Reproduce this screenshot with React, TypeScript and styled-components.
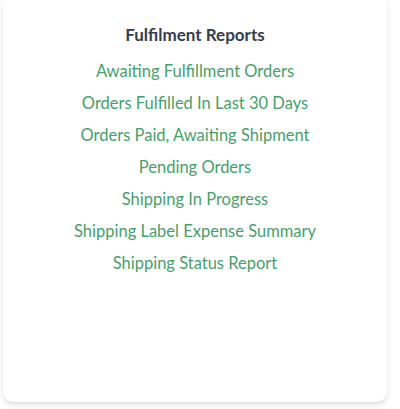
import React from "react";
import styled, { createGlobalStyle } from "styled-components";

const Global = createGlobalStyle`
  html, body { margin: 0; padding: 0; background: #ffffff; }
  body { font-family: Lato, "Open Sans", sans-serif; }
`;

const Page = styled.div`
  padding: 0 13px 7px 3px;
  height: 409px;
  box-sizing: border-box;
  display: flex;
`;

const Card = styled.section`
  flex: 1;
  background: #fff;
  border-radius: 0 0 10px 10px;
  box-shadow: 0 3px 6px rgba(0, 0, 0, 0.1), 0 1px 2px rgba(0, 0, 0, 0.06);
  padding: 23px 16px 0;
  display: flex;
  flex-direction: column;
  align-items: center;
`;

const Title = styled.h3`
  margin: 0 0 12px;
  font-size: 17px;
  line-height: 24px;
  font-weight: 700;
  color: #363d4c;
`;

const List = styled.ul`
  list-style: none;
  margin: 0;
  padding: 0;
  display: flex;
  flex-direction: column;
  align-items: center;
  gap: 8px;
`;

const Link = styled.a`
  display: block;
  font-size: 16.5px;
  line-height: 24px;
  color: #47a06c;
  text-decoration: none;
`;

const reports = [
  "Awaiting Fulfillment Orders",
  "Orders Fulfilled In Last 30 Days",
  "Orders Paid, Awaiting Shipment",
  "Pending Orders",
  "Shipping In Progress",
  "Shipping Label Expense Summary",
  "Shipping Status Report",
];

export default function App() {
  return (
    <>
      <Global />
      <Page>
        <Card>
          <Title>Fulfilment Reports</Title>
          <List>
            {reports.map((r) => (
              <li key={r}>
                <Link href="#">{r}</Link>
              </li>
            ))}
          </List>
        </Card>
      </Page>
    </>
  );
}
